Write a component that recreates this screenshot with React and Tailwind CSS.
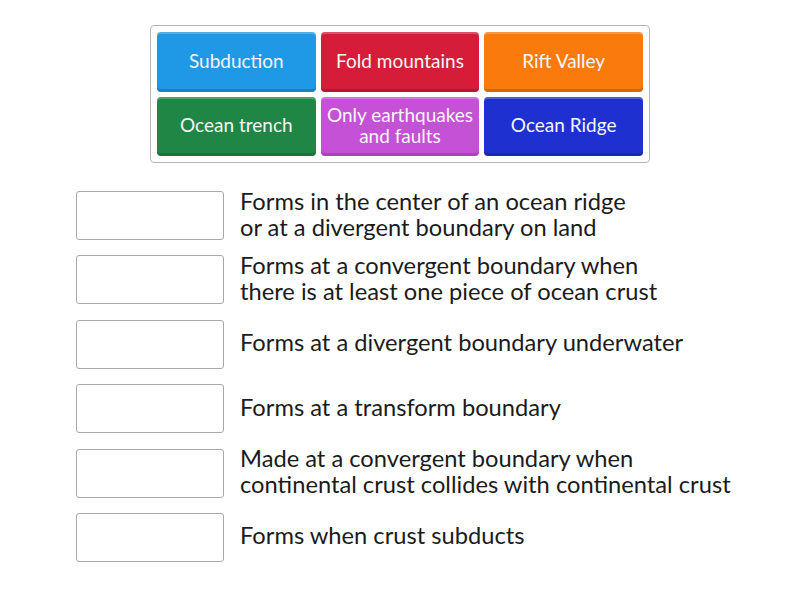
const tiles = [
  { label: 'Subduction', bg: 'bg-[#1f98e6]' },
  { label: 'Fold mountains', bg: 'bg-[#d51d3a]' },
  { label: 'Rift Valley', bg: 'bg-[#fb7a0c]' },
  { label: 'Ocean trench', bg: 'bg-[#208646]' },
  { label: 'Only earthquakes and faults', bg: 'bg-[#c551d6]' },
  { label: 'Ocean Ridge', bg: 'bg-[#1e30cf]' },
]

const rows = [
  ['Forms in the center of an ocean ridge', 'or at a divergent boundary on land'],
  ['Forms at a convergent boundary when', 'there is at least one piece of ocean crust'],
  ['Forms at a divergent boundary underwater'],
  ['Forms at a transform boundary'],
  ['Made at a convergent boundary when', 'continental crust collides with continental crust'],
  ['Forms when crust subducts'],
]

export default function App() {
  return (
    <div className="w-[800px] h-[600px] bg-white font-['Lato','Open_Sans',sans-serif]">
      <div className="pt-[25px]">
        <div className="ml-[150px] w-[500px] border border-[#b4b4b4] rounded-[4px] pt-[6px] px-[6px] pb-[6px] grid grid-cols-3 gap-[5px]">
          {tiles.map((t) => (
            <div
              key={t.label}
              className={`${t.bg} h-[59.5px] rounded-[4px] flex items-center justify-center text-center pb-[3px] text-[19px] leading-[21px] text-[#f6f6f6] whitespace-nowrap shadow-[inset_0_2px_0_rgba(255,255,255,0.22),inset_0_-3px_0_rgba(0,0,0,0.14)]`}
            >
              {t.label === 'Only earthquakes and faults' ? (
                <span>Only earthquakes<br />and faults</span>
              ) : t.label}
            </div>
          ))}
        </div>
      </div>

      <div className="mt-[28px] flex flex-col gap-[15.4px]">
        {rows.map((lines, i) => (
          <div key={i} className="flex items-center h-[49px]">
            <div className="ml-[76px] w-[148px] h-[49px] shrink-0 border border-[#a9a9a9] rounded-[3px] bg-white" />
            <p className="ml-[16px] pb-[4px] text-[23.7px] leading-[26px] text-[#1b1b1b] whitespace-nowrap">
              {lines[0]}
              {lines[1] && <br />}
              {lines[1]}
            </p>
          </div>
        ))}
      </div>
    </div>
  )
}
